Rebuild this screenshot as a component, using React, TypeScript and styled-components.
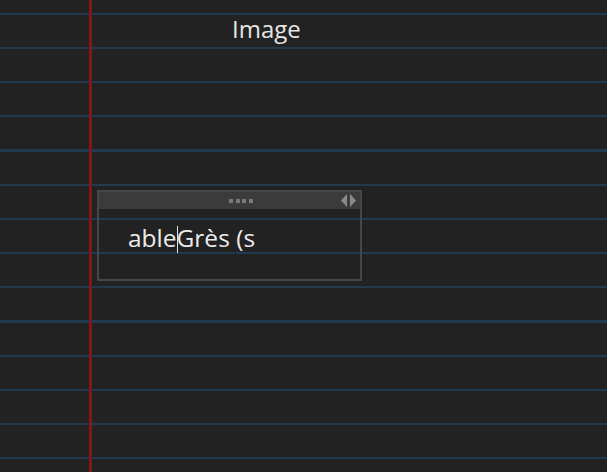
import React from 'react'
import styled, { createGlobalStyle } from 'styled-components'

const GlobalStyle = createGlobalStyle`
  html, body {
    margin: 0;
    padding: 0;
    background: #222222;
  }
  body {
    font-family: "Open Sans", "Liberation Sans", sans-serif;
  }
`

// ruled paper: blue lines every ~34px and a red margin line
const Page = styled.div`
  width: 607px;
  height: 472px;
  overflow: hidden;
  background-color: #222222;
  background-image:
    linear-gradient(to right, transparent 89px, #841616 89px, #841616 92px, transparent 92px),
    repeating-linear-gradient(
      to bottom,
      transparent 0px,
      transparent 12.6px,
      #203a4f 12.6px,
      #203a4f 14.8px,
      transparent 14.8px,
      transparent 34.2px
    );
`

const Title = styled.div`
  padding: 12px 0 0 232px;
  height: 190px;
  font-size: 24px;
  line-height: 34px;
  color: #e6e6e6;
  box-sizing: border-box;
`

const NoteBox = styled.div`
  margin-left: 97px;
  width: 265px;
  height: 91px;
  box-sizing: border-box;
  border: 2px solid #474747;
  display: flex;
  flex-direction: column;
`

const NoteHeader = styled.div`
  height: 17px;
  background: #3b3b3b;
  display: flex;
  align-items: center;
  padding-left: 130px;
  position: relative;
`

const Grip = styled.div`
  display: flex;
  gap: 2.5px;
`

const GripDot = styled.span`
  width: 4px;
  height: 4px;
  background: #7a7a7a;
`

const Arrows = styled.div`
  position: absolute;
  right: 4px;
  top: 2px;
  display: flex;
  gap: 3px;
`

const NoteBody = styled.div`
  padding: 12px 0 0 29px;
  font-size: 24.5px;
  line-height: 34px;
  color: #ececec;
  white-space: pre;
`

const Caret = styled.span`
  display: inline-block;
  width: 1px;
  height: 27px;
  background: #e0e0e0;
  vertical-align: -6px;
  margin: 0 -1px 0 0;
`

export default function App() {
  return (
    <>
      <GlobalStyle />
      <Page>
        <Title>Image</Title>
        <NoteBox>
          <NoteHeader>
            <Grip>
              {[0, 1, 2, 3].map(i => (
                <GripDot key={i} />
              ))}
            </Grip>
            <Arrows>
              <svg width="6" height="13" viewBox="0 0 6 13">
                <path d="M6 0 L0 6.5 L6 13 Z" fill="#8a8a8a" />
              </svg>
              <svg width="6" height="13" viewBox="0 0 6 13">
                <path d="M0 0 L6 6.5 L0 13 Z" fill="#8a8a8a" />
              </svg>
            </Arrows>
          </NoteHeader>
          <NoteBody>
            able<Caret />Grès (s
          </NoteBody>
        </NoteBox>
      </Page>
    </>
  )
}
